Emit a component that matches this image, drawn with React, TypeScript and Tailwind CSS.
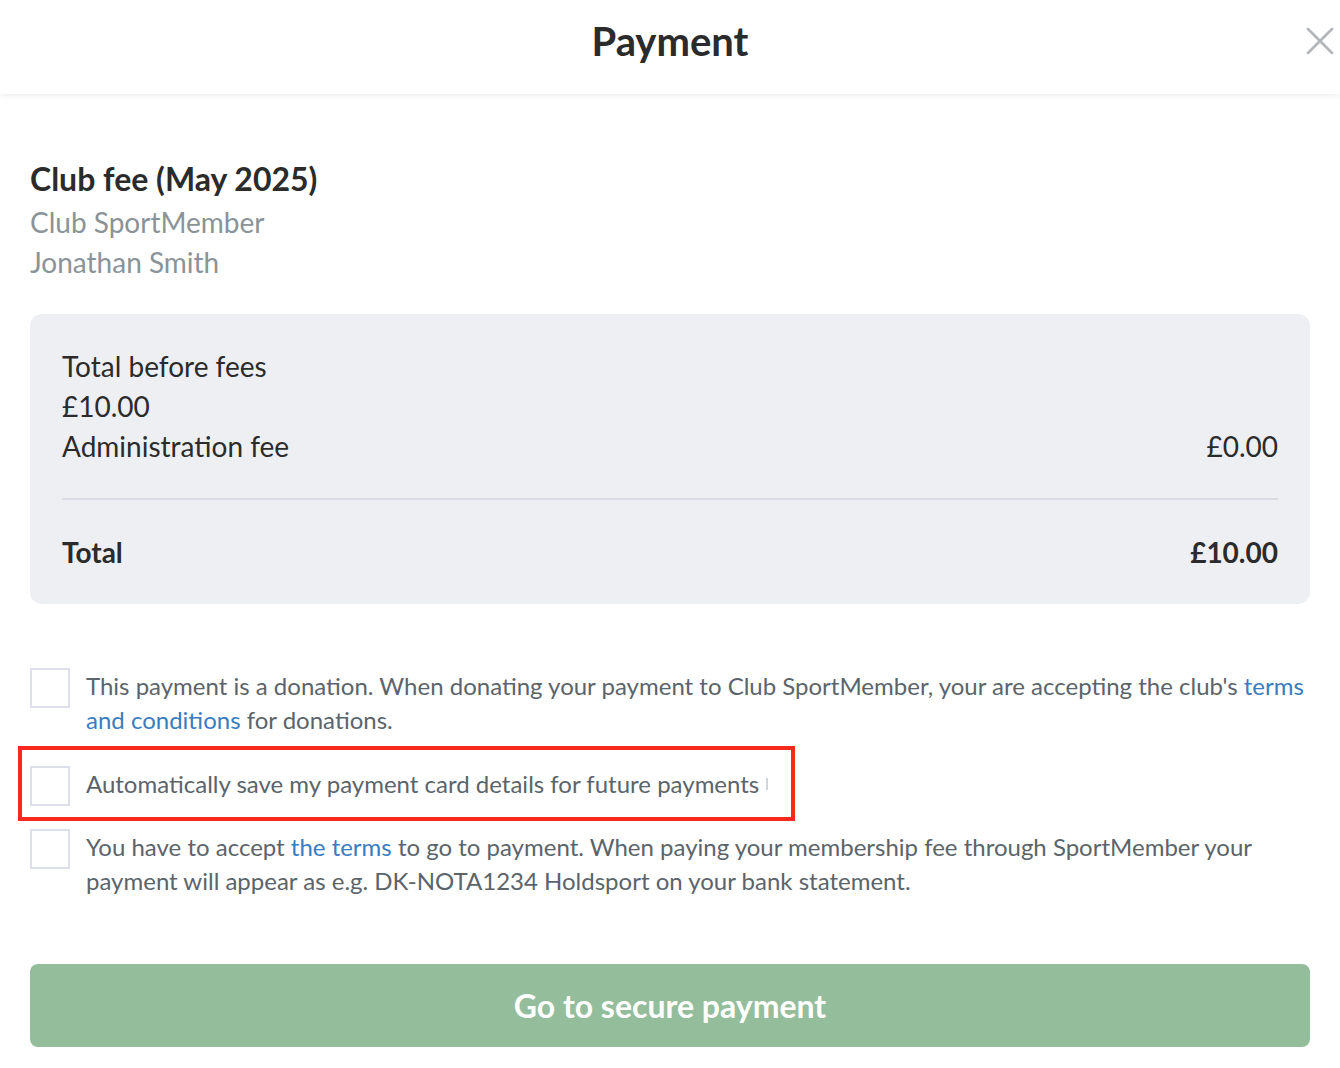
import { X } from 'lucide-react';

function Checkbox() {
  return <span className="mt-[-1px] block h-10 w-10 flex-shrink-0 border-2 border-[#dde0ea] bg-white" aria-hidden="true" />;
}

export default function App() {
  return (
    <div className="min-h-[1068px] w-[1340px] bg-white font-['Lato','Noto_Sans',sans-serif] text-[#2b2b2b]">
      {/* Header */}
      <header className="relative flex h-[94px] items-center justify-center bg-white shadow-[0_2px_6px_rgba(0,0,0,0.07)]">
        <h1 className="mt-[-12px] text-[40px] font-bold leading-none text-[#2b2b2b]">Payment</h1>
        <button className="absolute right-[-4px] top-[17px] text-[#b3b7bb]" aria-label="Close">
          <X className="h-[48px] w-[48px]" strokeWidth={1.4} />
        </button>
      </header>

      <main className="px-[30px]">
        {/* Item */}
        <section className="pt-[65px]">
          <h2 className="text-[32px] font-bold leading-[40px] text-[#2b2b2b]">Club fee (May 2025)</h2>
          <p className="mt-[3px] text-[28px] leading-[40px] text-[#8a9398]">Club SportMember</p>
          <p className="text-[28px] leading-[40px] text-[#8a9398]">Jonathan Smith</p>
        </section>

        {/* Summary */}
        <section className="mt-[32px] rounded-xl bg-[#eeeff3] px-8 py-8 text-[28px] leading-[40px] text-[#2b2b2b]">
          <div>Total before fees</div>
          <div>£10.00</div>
          <div className="flex justify-between">
            <span>Administration fee</span>
            <span>£0.00</span>
          </div>
          <div className="my-8 h-[2px] bg-[#d9dae3]" />
          <div className="flex justify-between font-bold">
            <span>Total</span>
            <span>£10.00</span>
          </div>
        </section>

        {/* Options */}
        <section className="mt-[65px] text-[24px] leading-[34px] text-[#5b646b]">
          <label className="flex gap-4">
            <Checkbox />
            <span>
              This payment is a donation. When donating your payment to Club SportMember, your are accepting the club's{' '}
              <a className="text-[#3a7cc0]">terms and conditions</a> for donations.
            </span>
          </label>

          <div className="relative mt-[30px]">
            <div className="pointer-events-none absolute left-[-12px] top-[-21px] h-[75px] w-[777px] border-4 border-[#f5291c]" />
            <label className="flex gap-4">
              <Checkbox />
              <span className="flex h-[34px] items-center">
                Automatically save my payment card details for future payments
                <span className="ml-[7px] inline-block h-[12px] w-[1.5px] bg-[#d4d7da]" />
              </span>
            </label>
          </div>

          <label className="mt-[24px] flex gap-4">
            <Checkbox />
            <span>
              You have to accept <a className="text-[#3a7cc0]">the terms</a> to go to payment. When paying your membership fee through SportMember your payment will appear as e.g. DK-NOTA1234 Holdsport on your bank statement.
            </span>
          </label>
        </section>

        {/* Button */}
        <button className="mt-[66px] flex h-[83px] w-full items-center justify-center rounded-lg bg-[#94bd9c] text-[32px] font-bold text-white">
          Go to secure payment
        </button>
      </main>
    </div>
  );
}
